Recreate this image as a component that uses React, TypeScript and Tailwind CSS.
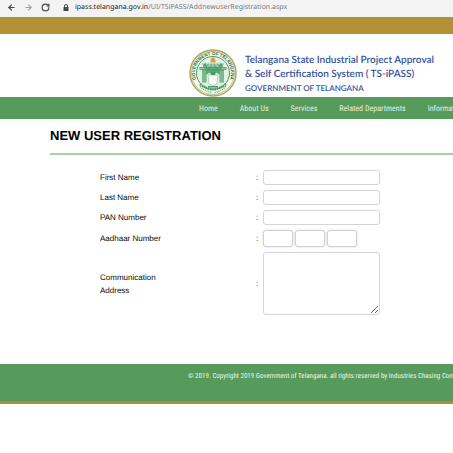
import { ArrowLeft, ArrowRight, RotateCw } from "lucide-react";

const navItems = ["Home", "About Us", "Services", "Related Departments", "Information"];

const textFields = [
  { id: "first-name", label: "First Name" },
  { id: "last-name", label: "Last Name" },
  { id: "pan-number", label: "PAN Number" },
];

const leaves = Array.from({ length: 15 }, (_, i) => i);

function Emblem() {
  return (
    <svg viewBox="0 0 96 96" className="size-12 shrink-0" role="img" aria-label="Government of Telangana emblem">
      <defs>
        <path id="ring-top" d="M 21 72 A 36 36 0 1 1 75 72" />
      </defs>
      <circle cx="48" cy="48" r="46" fill="#fbfbee" stroke="#b7a45a" strokeWidth="3" />
      <circle cx="48" cy="48" r="43" fill="none" stroke="#4a9a64" strokeWidth="1" />
      <circle cx="48" cy="48" r="33" fill="#e4f1e5" stroke="#4a9a64" strokeWidth="2" />
      <text fill="#236f43" fontSize="9" fontWeight="700" fontFamily="Liberation Sans, sans-serif">
        <textPath href="#ring-top" startOffset="50%" textAnchor="middle">
          GOVERNMENT OF TELANGANA
        </textPath>
      </text>
      <path d="M22 70 Q48 91 74 70" fill="none" stroke="#4a9a64" strokeWidth="5" strokeDasharray="3 1.5" />
      <path d="M22 75 Q32 85 46 87 M74 75 Q64 85 50 87" fill="none" stroke="#66aa78" strokeWidth="3" strokeDasharray="2 2" />
      <path d="M21 36 H75 V42 H70 V67 H61 V51 Q48 41 35 51 V67 H26 V42 H21Z" fill="#5da875" />
      <path d="M28 43 V66 M32 43 V66 M64 43 V66 M68 43 V66 M22 39 H74" stroke="#d8ecd9" strokeWidth="1" />
      <path d="M28 35 L32 27 L36 35 M60 35 L64 27 L68 35" fill="#5da875" />
      <g stroke="#3f9660" strokeWidth="1.5">
        {leaves.map((i) => (
          <line key={i} x1={34 + i * 2} y1="43" x2={27 + i * 3} y2="29" />
        ))}
      </g>
      <path d="M38 52 H58 L56 70 Q48 76 40 70Z" fill="#f8fbf4" stroke="#74b287" strokeWidth="1" />
      <path d="M42 46 H54 L52 52 H44Z M38 74 H58 V77 H38Z" fill="#4a9a64" />
      <circle cx="48" cy="21" r="5" fill="#e7c987" />
      <path d="M45 18 H51 V23 H53 V27 H43 V23 H45Z" fill="#d49a4b" />
      <circle cx="48" cy="4" r="3" fill="#d6a957" />
    </svg>
  );
}

export default function App() {
  return (
    <div className="min-h-screen overflow-hidden bg-white font-['Liberation_Sans',Arial,sans-serif] text-black [text-rendering:geometricPrecision]">
      <div className="flex h-[17px] items-center overflow-hidden bg-[#f3f3f4] pb-[2px] pl-[7px] text-[#45474a]">
        <div className="flex w-[68px] shrink-0 items-center gap-[8px]">
          <button type="button" aria-label="Back"><ArrowLeft size={9} strokeWidth={3} /></button>
          <button type="button" aria-label="Forward" className="text-[#a0a2a4]"><ArrowRight size={9} strokeWidth={3} /></button>
          <button type="button" aria-label="Reload"><RotateCw size={9} strokeWidth={3} /></button>
          <svg viewBox="0 0 12 14" className="ml-[5px] h-[7px] w-[6px]" aria-hidden="true">
            <path d="M3 7 V4 a3 3 0 0 1 6 0 V7" fill="none" stroke="currentColor" strokeWidth="2" />
            <rect x="1" y="6" width="10" height="8" rx="1" fill="currentColor" />
          </svg>
        </div>
        <div className="whitespace-nowrap font-['Noto_Sans',sans-serif] text-[7px] leading-3 text-[#77797c]">
          <span className="text-[#202224]">ipass.telangana.gov.in</span>/UI/TSiPASS/AddnewuserRegistration.aspx
        </div>
      </div>
      <div className="h-[17px] bg-[#b29035]" />

      <header className="flex h-[63px] items-end gap-2 pl-[189px]">
        <Emblem />
        <div className="whitespace-nowrap pb-[2px] font-['Lato',sans-serif] text-[10px] font-semibold leading-[14px] text-[#3552a0]">
          <p>Telangana State Industrial Project Approval</p>
          <p>&amp; Self Certification System ( TS-iPASS)</p>
          <p className="text-[8px]">GOVERNMENT OF TELANGANA</p>
        </div>
      </header>

      <nav className="flex h-[22px] items-center gap-[22px] overflow-hidden whitespace-nowrap bg-[#569b5b] pl-[199px] pt-px font-['Roboto_Condensed','Roboto',sans-serif] text-[8px] text-[#e1efdf]">
        {navItems.map((item) => (
          <a key={item} href="#">{item}</a>
        ))}
      </nav>

      <main className="ml-[50px]">
        <h1 className="border-b-2 border-[#a4d3a6] pb-[9px] pt-[9px] text-[13px] font-bold leading-4">NEW USER REGISTRATION</h1>
        <form className="flex flex-col gap-[5px] pl-[50px] pt-[15px] text-[8px] text-[#080808]">
          {textFields.map((field) => (
            <div key={field.id} className="flex items-center">
              <label htmlFor={field.id} className="w-[156px] shrink-0">{field.label}</label>
              <span className="w-[7px] shrink-0">:</span>
              <input id={field.id} type="text" className="h-[15px] w-[117px] rounded-[3px] border border-[#d4d4d4] bg-white px-1" />
            </div>
          ))}
          <div className="flex items-center">
            <label htmlFor="aadhaar-1" className="w-[156px] shrink-0">Aadhaar Number</label>
            <span className="w-[7px] shrink-0">:</span>
            <div className="flex gap-[2px]">
              {[1, 2, 3].map((part) => (
                <input key={part} id={`aadhaar-${part}`} aria-label={`Aadhaar Number part ${part}`} type="text" maxLength={4} className="h-[17px] w-[30px] rounded-[3px] border border-[#d0d0d0] bg-white px-1 shadow-[0_0_3px_#dddddd]" />
              ))}
            </div>
          </div>
          <div className="flex items-center">
            <label htmlFor="address" className="w-[156px] shrink-0 leading-[13px]">Communication<br />Address</label>
            <span className="w-[7px] shrink-0">:</span>
            <textarea id="address" className="h-[63px] w-[117px] resize rounded-[3px] border border-[#d4d4d4] bg-white p-1" />
          </div>
        </form>
      </main>

      <footer className="mt-[49px] h-10 overflow-hidden whitespace-nowrap border-b-[3px] border-[#a5913c] bg-[#569b5b] pl-[188px] pt-[6px] font-['Roboto_Condensed','Roboto',sans-serif] text-[7px] leading-3 text-[#edf5eb]">
        © 2019. Copyright 2019 Government of Telangana. all rights reserved by Industries Chasing Commissionerate
      </footer>
    </div>
  );
}
